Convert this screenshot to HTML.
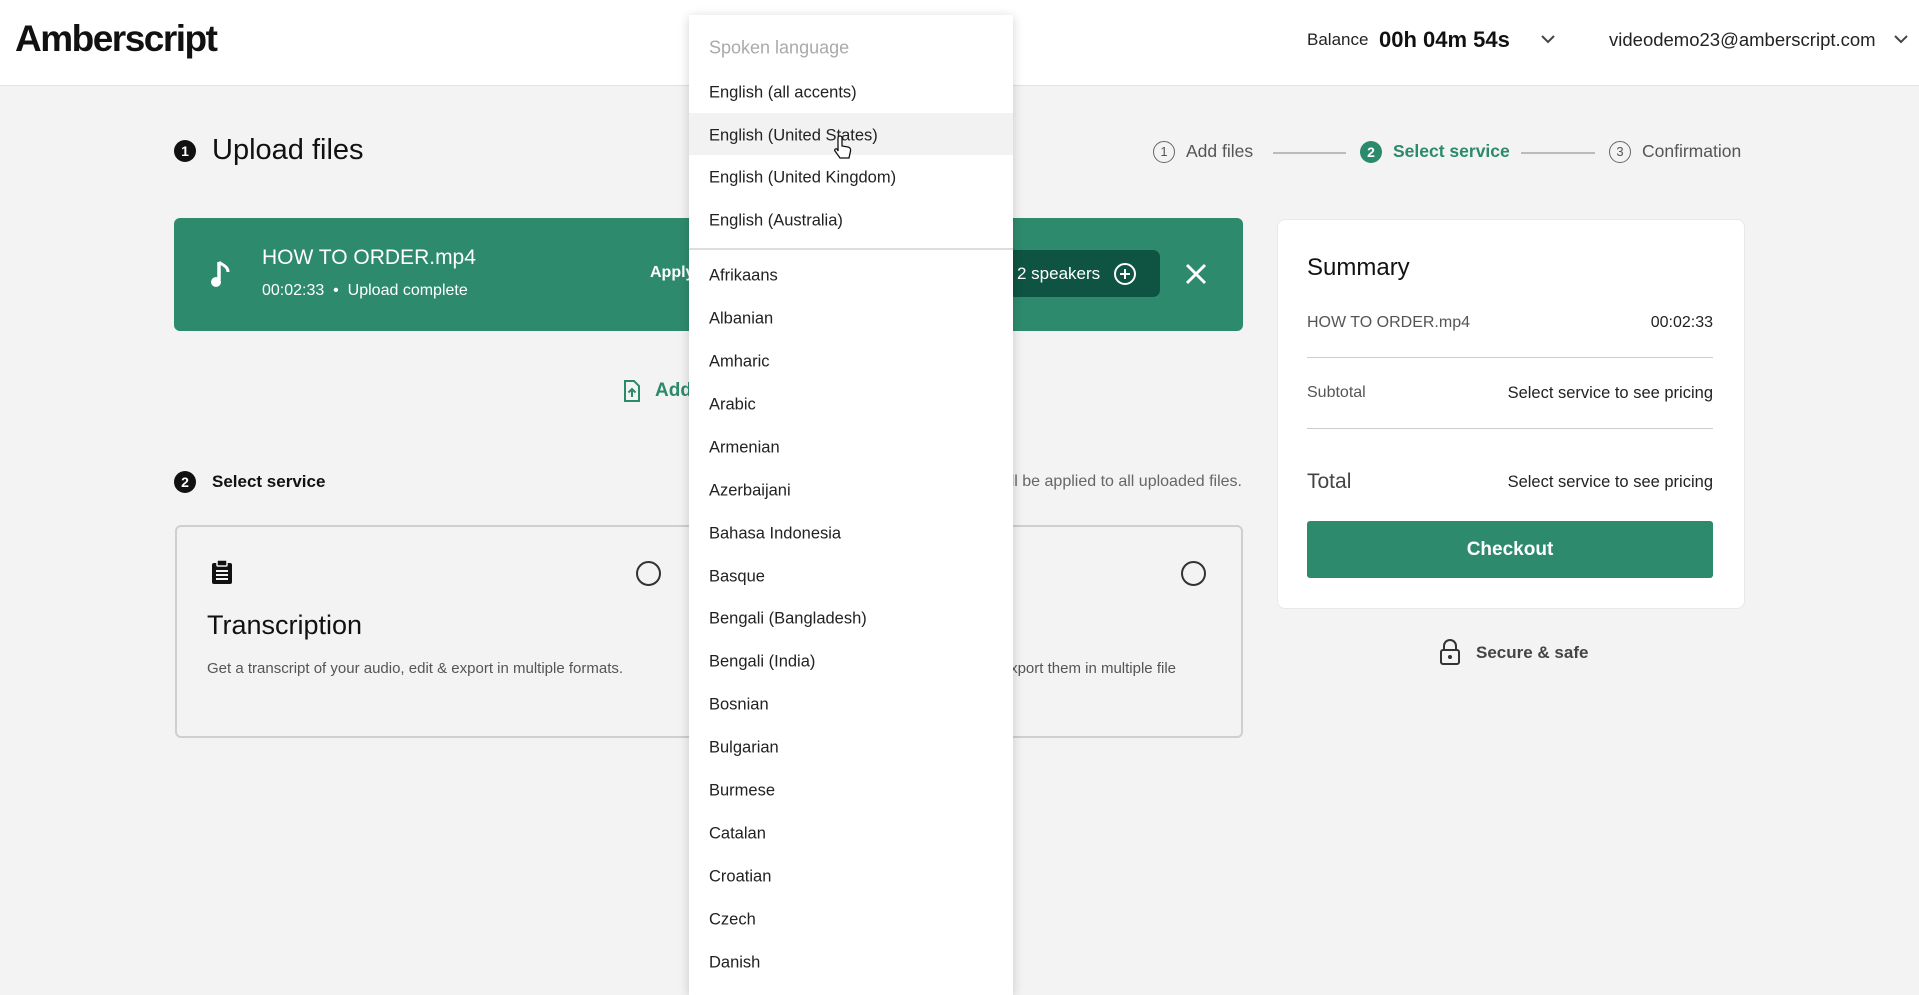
<!DOCTYPE html>
<html><head><meta charset="utf-8"><style>
*{box-sizing:border-box;margin:0;padding:0}
body{width:1919px;height:978px;overflow:hidden;background:#f3f3f3;font-family:"Liberation Sans",sans-serif;color:#111;position:relative}
.abs{position:absolute;white-space:nowrap}
.hdr{position:absolute;left:0;top:0;width:1919px;height:86px;background:#fff;border-bottom:1px solid #e2e2e2}
.num{position:absolute;width:22px;height:22px;border-radius:50%;background:#111;color:#fff;font-size:14px;font-weight:bold;text-align:center;line-height:22px}
.onum{position:absolute;width:22px;height:22px;border-radius:50%;border:1.5px solid #666;color:#555;font-size:13px;text-align:center;line-height:19px}
.dd{position:absolute;left:689px;top:15px;width:324px;height:980px;background:#fff;box-shadow:0 2px 10px rgba(0,0,0,.18)}
.dd div{position:absolute;left:20px;font-size:16.5px;color:#222;transform:translateY(-50%);margin-top:2px}
.card{position:absolute;top:525px;height:213px;border:2px solid #cfcfcf;border-radius:6px;background:#f3f3f3}
.radio{position:absolute;width:25px;height:25px;border:2px solid #333;border-radius:50%}
</style></head><body>
<div class="hdr"></div>
<div class="abs" style="left:15px;top:18px;font-size:37px;font-weight:bold;letter-spacing:-1.5px">Amberscript</div>
<div class="abs" style="left:1307px;top:30px;font-size:17px;color:#222">Balance</div>
<div class="abs" style="left:1379px;top:27px;font-size:22px;font-weight:bold">00h 04m 54s</div>
<svg class="abs" style="left:1540px;top:34px" width="16" height="10"><path d="M2 2l6 6 6-6" stroke="#444" stroke-width="2" fill="none"/></svg>
<div class="abs" style="left:1609px;top:29px;font-size:18.5px;color:#222">videodemo23@amberscript.com</div>
<svg class="abs" style="left:1893px;top:34px" width="16" height="10"><path d="M2 2l6 6 6-6" stroke="#444" stroke-width="2" fill="none"/></svg>

<div class="num" style="left:174px;top:140px">1</div>
<div class="abs" style="left:212px;top:134px;font-size:29px">Upload files</div>

<div class="onum" style="left:1153px;top:141px">1</div>
<div class="abs" style="left:1186px;top:141px;font-size:17.5px;color:#555">Add files</div>
<div class="abs" style="left:1273px;top:152px;width:73px;height:1.5px;background:#bbb"></div>
<div class="num" style="left:1360px;top:141px;background:#2a8a6b">2</div>
<div class="abs" style="left:1393px;top:141px;font-size:17.5px;color:#2a8a6b;font-weight:bold">Select service</div>
<div class="abs" style="left:1521px;top:152px;width:74px;height:1.5px;background:#bbb"></div>
<div class="onum" style="left:1609px;top:141px">3</div>
<div class="abs" style="left:1642px;top:141px;font-size:17.5px;color:#555">Confirmation</div>

<div class="abs" style="left:174px;top:218px;width:1069px;height:113px;background:#2e8a6d;border-radius:6px"></div>
<svg class="abs" style="left:210px;top:260px" width="22" height="30"><path d="M9 2v18" stroke="#fff" stroke-width="3.5"/><path d="M9 2c3 3 9 4 9 10" stroke="#fff" stroke-width="3" fill="none"/><circle cx="6" cy="22" r="5" fill="#fff"/></svg>
<div class="abs" style="left:262px;top:246px;font-size:21px;color:#fff">HOW TO ORDER.mp4</div>
<div class="abs" style="left:262px;top:282px;font-size:16px;color:#fff">00:02:33 &nbsp;•&nbsp; Upload complete</div>
<div class="abs" style="left:650px;top:264px;font-size:16px;color:#fff;font-weight:bold">Apply</div>
<div class="abs" style="left:960px;top:250px;width:200px;height:47px;background:#0f5443;border-radius:7px"></div>
<div class="abs" style="left:1017px;top:264px;font-size:17px;color:#fff">2 speakers</div>
<svg class="abs" style="left:1113px;top:262px" width="24" height="24"><circle cx="12" cy="12" r="10" stroke="#fff" stroke-width="2" fill="none"/><path d="M12 7v10M7 12h10" stroke="#fff" stroke-width="2"/></svg>
<svg class="abs" style="left:1184px;top:262px" width="24" height="24"><path d="M3 3l18 18M21 3L3 21" stroke="#fff" stroke-width="3"/></svg>

<svg class="abs" style="left:623px;top:380px" width="18" height="22"><path d="M2 1h9l5 5v15H2z" stroke="#2a8a6b" stroke-width="2" fill="none"/><path d="M9 17V9M5.5 12.5L9 9l3.5 3.5" stroke="#2a8a6b" stroke-width="2" fill="none"/></svg>
<div class="abs" style="left:655px;top:380px;font-size:19px;color:#2a8a6b;font-weight:bold">Add</div>

<div class="num" style="left:174px;top:471px">2</div>
<div class="abs" style="left:212px;top:472px;font-size:17px;font-weight:bold">Select service</div>
<div class="abs" style="left:900px;top:473px;width:342px;text-align:right;font-size:16px;color:#666">will be applied to all uploaded files.</div>

<div class="card" style="left:175px;width:520px"></div>
<div class="card" style="left:723px;width:520px"></div>
<svg class="abs" style="left:211px;top:559px" width="22" height="26"><rect x="1" y="4" width="20" height="21" rx="2" fill="#111"/><rect x="6" y="1" width="10" height="6" rx="1" fill="#111" stroke="#f3f3f3" stroke-width="1.5"/><path d="M5 12h12M5 16h12M5 20h12" stroke="#f3f3f3" stroke-width="2"/></svg>
<div class="radio" style="left:636px;top:561px"></div>
<div class="radio" style="left:1181px;top:561px"></div>
<div class="abs" style="left:207px;top:610px;font-size:27px">Transcription</div>
<div class="abs" style="left:207px;top:660px;font-size:15px;color:#555">Get a transcript of your audio, edit &amp; export in multiple formats.</div>
<div class="abs" style="left:960px;top:660px;width:216px;text-align:right;font-size:15px;color:#555;overflow:hidden">export them in multiple file</div>

<div class="abs" style="left:1277px;top:219px;width:468px;height:390px;background:#fff;border-radius:8px;border:1px solid #e8e8e8"></div>
<div class="abs" style="left:1307px;top:254px;font-size:24px">Summary</div>
<div class="abs" style="left:1307px;top:314px;font-size:16px;color:#555">HOW TO ORDER.mp4</div>
<div class="abs" style="left:1600px;top:314px;width:113px;text-align:right;font-size:16px;color:#222">00:02:33</div>
<div class="abs" style="left:1307px;top:357px;width:406px;height:1px;background:#ccc"></div>
<div class="abs" style="left:1307px;top:384px;font-size:16px;color:#555">Subtotal</div>
<div class="abs" style="left:1450px;top:384px;width:263px;text-align:right;font-size:16.5px;color:#222">Select service to see pricing</div>
<div class="abs" style="left:1307px;top:428px;width:406px;height:1px;background:#ccc"></div>
<div class="abs" style="left:1307px;top:470px;font-size:21px;color:#444">Total</div>
<div class="abs" style="left:1450px;top:473px;width:263px;text-align:right;font-size:16.5px;color:#222">Select service to see pricing</div>
<div class="abs" style="left:1307px;top:521px;width:406px;height:57px;background:#2e8a6d;border-radius:3px;color:#fff;font-weight:bold;font-size:19px;text-align:center;line-height:57px">Checkout</div>
<svg class="abs" style="left:1439px;top:638px" width="22" height="28"><path d="M5 12V8a6 6 0 0 1 12 0v4" stroke="#333" stroke-width="2" fill="none"/><rect x="2" y="12" width="18" height="14" rx="2" stroke="#333" stroke-width="2" fill="none"/><circle cx="11" cy="19" r="2" fill="#333"/></svg>
<div class="abs" style="left:1476px;top:643px;font-size:17px;color:#444;font-weight:bold">Secure &amp; safe</div>

<div class="dd">
<div style="top:31px;color:#aaa;font-size:18px">Spoken language</div>
<div style="top:76px">English (all accents)</div>
<span style="position:absolute;left:0;top:98px;width:324px;height:42px;background:#f2f2f2"></span>
<div style="top:119px">English (United States)</div>
<div style="top:161px">English (United Kingdom)</div>
<div style="top:204px">English (Australia)</div>
<span style="position:absolute;left:0;top:233px;width:324px;height:1.5px;background:#ddd"></span>
<div style="top:259px">Afrikaans</div>
<div style="top:302px">Albanian</div>
<div style="top:345px">Amharic</div>
<div style="top:388px">Arabic</div>
<div style="top:431px">Armenian</div>
<div style="top:474px">Azerbaijani</div>
<div style="top:517px">Bahasa Indonesia</div>
<div style="top:560px">Basque</div>
<div style="top:602px">Bengali (Bangladesh)</div>
<div style="top:645px">Bengali (India)</div>
<div style="top:688px">Bosnian</div>
<div style="top:731px">Bulgarian</div>
<div style="top:774px">Burmese</div>
<div style="top:817px">Catalan</div>
<div style="top:860px">Croatian</div>
<div style="top:903px">Czech</div>
<div style="top:946px">Danish</div>
</div>
<svg class="abs" style="left:832px;top:135px" width="20" height="26"><path d="M6 12V3a2 2 0 0 1 4 0v8l6 1c2 .5 3 2 2.5 4L17 23H8L3 16c-1-1.5 1-3 2.5-1.5L6 16z" fill="#fff" stroke="#111" stroke-width="1.3"/></svg>
</body></html>
